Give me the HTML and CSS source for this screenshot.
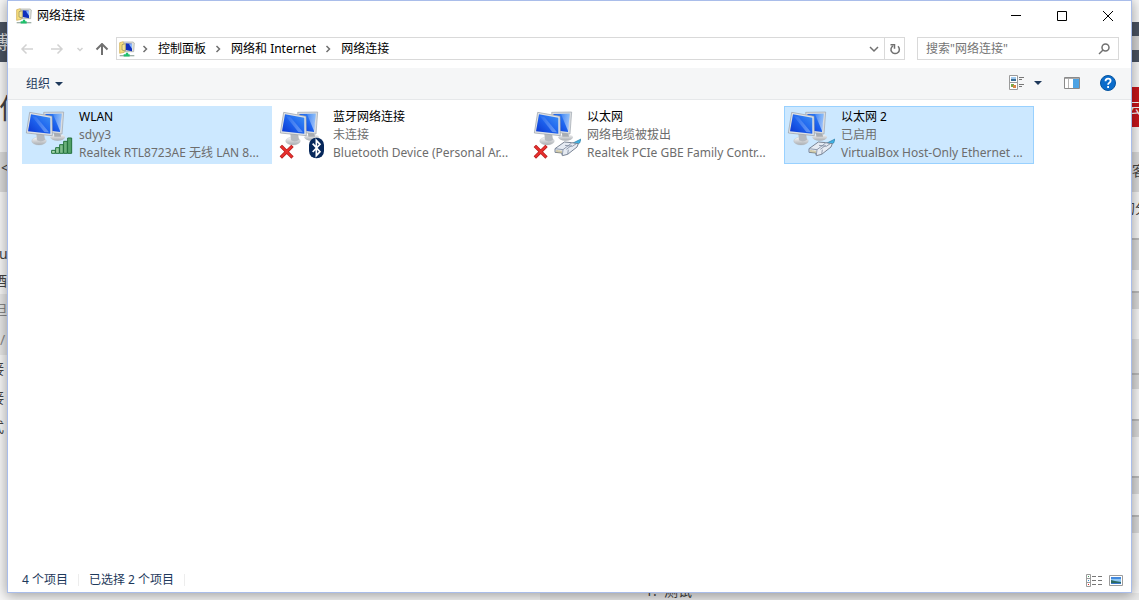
FILE: index.html
```html
<!DOCTYPE html>
<html lang="zh-CN">
<head>
<meta charset="utf-8">
<title>网络连接</title>
<link rel="stylesheet" href="styles.css">
</head>
<body>
<svg class="defs" aria-hidden="true">
  <defs>
    <linearGradient id="screen" x1="0" y1="1" x2="1" y2="0">
      <stop offset="0" stop-color="#0b35cf"/><stop offset=".5" stop-color="#1d63ee"/><stop offset="1" stop-color="#3f92f5"/>
    </linearGradient>
    <linearGradient id="shine" x1="0" y1="0" x2="1" y2="1">
      <stop offset="0" stop-color="#fff" stop-opacity=".1"/><stop offset="1" stop-color="#d8ecff" stop-opacity=".75"/>
    </linearGradient>
    <linearGradient id="metal" x1="0" y1="0" x2="0" y2="1">
      <stop offset="0" stop-color="#fafafa"/><stop offset="1" stop-color="#a8acb1"/>
    </linearGradient>
    <linearGradient id="bar" x1="0" y1="0" x2="1" y2="0">
      <stop offset="0" stop-color="#b5e0b8"/><stop offset="1" stop-color="#4a9b60"/>
    </linearGradient>
    <symbol id="monitors" viewBox="0 0 144 156">
      <ellipse cx="98" cy="88" rx="22" ry="10" fill="url(#metal)"/>
      <path d="M86 70h19l3 16H88z" fill="#a9adb2"/>
      <path d="M56 13l60-1-5 66-50-6z" fill="#d9dcdf" stroke="#9ba3ac" stroke-width="2"/>
      <path d="M61 18l49-1-5 55-40-5z" fill="url(#screen)"/>
      <path d="M84 18h26l-4 53z" fill="url(#shine)"/>
      <ellipse cx="42" cy="99" rx="22" ry="12" fill="url(#metal)" stroke="#b4b8bc"/>
      <path d="M34 76h23l3 20q-12 8-24 1z" fill="#b5b9be"/>
      <path d="M14 13l67 12 1 58-78-8z" fill="#dfe2e5" stroke="#959da6" stroke-width="2"/>
      <path d="M18 19l58 10v48L9 70z" fill="url(#screen)"/>
      <path d="M20 24l14 3 38 46-14-1z" fill="url(#shine)" opacity=".5"/>
    </symbol>
    <symbol id="signal" viewBox="0 0 144 156">
      <g fill="url(#bar)" stroke="#23713c" stroke-width="3">
        <path d="M80 127h11v9H80zM92 119h11v17H92zM104 110h11v26h-11zM116 100h11v36h-11zM128 90h12v46h-12z"/>
      </g>
    </symbol>
    <symbol id="cross" viewBox="0 0 144 156">
      <path d="M9 117l28 28M37 117L9 145" stroke="#b41b1b" stroke-width="10" stroke-linecap="square" fill="none"/>
      <path d="M9 117l28 28M37 117L9 145" stroke="#e8302e" stroke-width="6" stroke-linecap="square" fill="none"/>
    </symbol>
    <symbol id="bluetooth" viewBox="0 0 144 156">
      <rect x="90" y="89" width="45" height="62" rx="22" fill="#06275a"/>
      <path d="M101 107l22 24-11 12V97l11 12-22 23" stroke="#fff" stroke-width="5" fill="none"/>
    </symbol>
    <symbol id="plug" viewBox="0 0 144 156">
      <path d="M118 106l26-13-4 12-16 7z" fill="#3fb2e4" stroke="#2c7da6" stroke-width="2"/>
      <path d="M66 122l28-20 22 2 20 3-4 10-28 22-16 4-2-8-20-2z" fill="#e6ebf3" stroke="#7a8494" stroke-width="3"/>
      <path d="M66 122l24 3 26-20M90 125l-2 16M96 112l22 3 12-8M100 124l16-12M104 139l2-14" stroke="#7f8ba0" stroke-width="2.500" fill="none"/>
      <path d="M72 126v7M78 127v7M84 128v7" stroke="#c0ae67" stroke-width="3"/>
    </symbol>
    <symbol id="folder-net" viewBox="0 0 48 48">
      <path d="M2 5l11-3 3 3v29L2 37z" fill="#f7df7d" stroke="#c9a545" stroke-width="2"/>
      <path d="M14 3h28l4 3-2 26H18z" fill="#dfe2de" stroke="#a4a7a2" stroke-width="2"/>
      <path d="M20 7l19 1v23l-19-4z" fill="#102fbd"/>
      <path d="M30 10l9-1v14z" fill="#8bb8ff"/>
      <path d="M9 11l10-3v22l-10-3z" fill="#f3e49a" stroke="#8f8a5c" stroke-width="2"/>
      <path d="M2 44h44" stroke="#9fb0a8" stroke-width="4"/>
      <path d="M14 43h18M24 35v9" stroke="#1fbf6b" stroke-width="7"/>
    </symbol>
    <symbol id="crumb" viewBox="0 0 8 8">
      <path d="M2.500 1l3 3-3 3" fill="none" stroke="#707070" stroke-width="1.500"/>
    </symbol>
  </defs>
</svg>

<div class="desktop">
  <div class="page-behind" aria-hidden="true">
    <div class="edge edge-left">
      <i class="band dark"></i><i class="band tab"></i><i class="band code"></i>
      <span class="bit l1">博</span><span class="bit l2">何</span><span class="bit l3">&lt;</span>
      <span class="bit l4">u</span><span class="bit l5">酒</span><span class="bit l6">但</span>
      <span class="bit l7">/</span><span class="bit l8">接</span><span class="bit l9">接</span><span class="bit l10">式</span>
    </div>
    <div class="edge edge-right">
      <i class="band dark"></i><i class="pill"></i><i class="band red"></i><i class="band tab"></i>
      <i class="band r1"></i><i class="band r2"></i><i class="band r3"></i><i class="band r4"></i>
      <i class="band r5"></i><i class="band r6"></i><i class="band r7"></i>
      <span class="bit e1">云</span><span class="bit e2">客</span><span class="bit e3">的分</span>
    </div>
    <div class="edge-bottom"><span class="bit b1">1.&nbsp; 测试</span></div>
  </div>

  <main class="window">
    <header class="titlebar">
      <svg class="icon16"><use href="#folder-net"/></svg>
      <h1>网络连接</h1>
      <div class="captions">
        <button aria-label="最小化"><svg viewBox="0 0 10 10"><path d="M0 4.500h10"/></svg></button>
        <button aria-label="最大化"><svg viewBox="0 0 10 10"><path d="M.5 .5h9v9h-9z"/></svg></button>
        <button aria-label="关闭"><svg viewBox="0 0 10 10"><path d="M0 0l10 10M10 0L0 10"/></svg></button>
      </div>
    </header>

    <div class="navbar">
      <button class="nav off" aria-label="后退"><svg viewBox="0 0 14 12"><path d="M13 6H2M6.500 1.500L2 6l4.500 4.500"/></svg></button>
      <button class="nav off" aria-label="前进"><svg viewBox="0 0 14 12"><path d="M1 6h11M7.500 1.500L12 6l-4.500 4.500"/></svg></button>
      <button class="nav off recent" aria-label="最近浏览的位置"><svg viewBox="0 0 14 12"><path d="M4.500 5L7 7.500 9.500 5"/></svg></button>
      <button class="nav up" aria-label="上移"><svg viewBox="0 0 14 12"><path d="M7 12V1.500M1.500 6.500L7 1l5.500 5.500"/></svg></button>
      <nav class="address" aria-label="地址">
        <svg class="icon16"><use href="#folder-net"/></svg>
        <svg class="sep"><use href="#crumb"/></svg><a href="#">控制面板</a>
        <svg class="sep"><use href="#crumb"/></svg><a href="#">网络和 Internet</a>
        <svg class="sep"><use href="#crumb"/></svg><a href="#">网络连接</a>
        <button class="drop" aria-label="以前的位置"><svg viewBox="0 0 10 10"><path d="M1 3l4 4 4-4"/></svg></button>
        <button class="refresh" aria-label="刷新"><svg viewBox="0 0 12 12"><path d="M4 2.800a4.200 4.200 0 1 0 5 .5"/><path d="M1.500 1.800h4v4"/></svg></button>
      </nav>
      <form class="search">
        <input type="text" aria-label="搜索" placeholder='搜索"网络连接"'>
        <svg viewBox="0 0 12 12"><circle cx="7.500" cy="4.500" r="3.500"/><path d="M5 7L1 11"/></svg>
      </form>
    </div>

    <div class="commands">
      <button class="organize">组织 <i class="tri"></i></button>
      <div class="views">
        <button aria-label="更改视图"><svg width="16" height="16" viewBox="0 0 16 16">
          <path d="M.5 .5h8v14h-8zM.5 7.500h8" fill="#fff" stroke="#9b9b9b"/><path d="M2 2h5v2H2z" fill="#9fc9ee"/><path d="M2 4h5v2H2z" fill="#3b6f96"/><path d="M2 9h3v3H2z" fill="#76a848"/><path d="M4 10h3v3H4z" fill="#d98546"/>
          <path d="M10 2.500h5M10 4.500h3M10 9.500h5M10 11.500h3" stroke="#777"/></svg></button>
        <button class="more" aria-label="更多选项"><i class="tri"></i></button>
        <button class="pane" aria-label="预览窗格"><svg width="16" height="12" viewBox="0 0 16 12">
          <path d="M.5 .5h15v11H.5z" fill="#fff" stroke="#8a8a8a"/><path d="M1 1h14v1H1z" fill="#aaa"/><path d="M4.500 2v9" stroke="#b5b5b5"/><path d="M9 2h6v9H9z" fill="#4da3e4"/></svg></button>
        <button class="help" aria-label="帮助"><svg width="16" height="16" viewBox="0 0 16 16">
          <circle cx="8" cy="8" r="7.500" fill="#0b6ccb" stroke="#06549f"/><path d="M5.500 6.200q0-2.600 2.600-2.600 2.500 0 2.500 2.200 0 1.200-1.300 2-1.200.7-1.200 1.900M8.100 11v2" fill="none" stroke="#fff" stroke-width="1.800"/></svg></button>
      </div>
    </div>

    <ul class="connections">
      <li><button class="tile selected">
        <svg class="device"><use href="#monitors"/><use href="#signal"/></svg>
        <span class="info"><b>WLAN</b><span>sdyy3</span><span>Realtek RTL8723AE 无线 LAN 8...</span></span></button></li>
      <li><button class="tile">
        <svg class="device"><use href="#monitors"/><use href="#cross"/><use href="#bluetooth"/></svg>
        <span class="info"><b>蓝牙网络连接</b><span>未连接</span><span>Bluetooth Device (Personal Ar...</span></span></button></li>
      <li><button class="tile">
        <svg class="device"><use href="#monitors"/><use href="#cross"/><use href="#plug"/></svg>
        <span class="info"><b>以太网</b><span>网络电缆被拔出</span><span>Realtek PCIe GBE Family Contr...</span></span></button></li>
      <li><button class="tile selected focused">
        <svg class="device"><use href="#monitors"/><use href="#plug"/></svg>
        <span class="info"><b>以太网 2</b><span>已启用</span><span>VirtualBox Host-Only Ethernet ...</span></span></button></li>
    </ul>

    <footer class="status">
      <span>4 个项目</span><span>已选择 2 个项目</span>
      <div class="modes">
        <button aria-label="详细信息"><svg width="16" height="13" viewBox="0 0 16 13">
          <path d="M.5 .5h4v12h-4zM.5 4.500h4M.5 8.500h4" fill="#fff" stroke="#9b9b9b"/><path d="M2 2h1v1H2z" fill="#3b9c5b"/><path d="M2 6h1v1H2z" fill="#2d8ed8"/><path d="M2 10h1v1H2z" fill="#d22"/>
          <path d="M6 2.500h4M12 2.500h4M6 6.500h4M12 6.500h4M6 10.500h4M12 10.500h4" stroke="#777"/></svg></button>
        <button aria-label="大图标"><svg width="14" height="11" viewBox="0 0 14 11">
          <path d="M.5 .5h13v10H.5z" fill="#fff" stroke="#9b9b9b"/><path d="M2 2h10v7H2z" fill="#8dc6f4"/><path d="M2 2h10v2H2z" fill="#4389dd"/><path d="M2 5l4 1 6 1v2H2z" fill="#2b6a62"/><path d="M2 8h10v1H2z" fill="#3a78c9"/></svg></button>
      </div>
    </footer>
  </main>
</div>
</body>
</html>
```
FILE: styles.css
```css
* { box-sizing: border-box; }
body {
  margin: 0;
  font: 12px/18px "Noto Sans", "Noto Sans CJK SC", sans-serif;
  color: #000;
}
button {
  margin: 0;
  padding: 0;
  border: 0;
  background: none;
  font: inherit;
  color: inherit;
  display: flex;
  align-items: center;
  justify-content: center;
}
svg { display: block; flex: none; }
.defs { position: absolute; width: 0; height: 0; }

.desktop {
  position: relative;
  display: flex;
  min-height: 100vh;
  padding: 0 7px 7px;
  overflow: hidden;
  background: #f8f8f8;
}

/* Web page seen around the window */
.page-behind { position: absolute; inset: 0; overflow: hidden; }
.edge { position: absolute; top: 0; bottom: 0; width: 7px; overflow: hidden; }
.edge-left { left: 0; }
.edge-right { right: 0; }
.edge-bottom {
  position: absolute;
  left: 540px;
  right: 0;
  bottom: 0;
  height: 7px;
  background: #ebebeb;
}
.band { position: absolute; left: 0; right: 0; background: #dcdcdc; }
.band.dark { top: 22px; height: 40px; background: #4a5362; }
.band.tab { top: 152px; height: 40px; }
.band.code { top: 294px; height: 61px; background: #e8e8e8; }
.band.red { top: 87px; height: 40px; background: #c8161d; }
.pill { position: absolute; left: 0; right: 0; top: 36px; height: 14px; background: #d5d5d5; }
.r1 { top: 238px; height: 32px; }
.r2 { top: 291px; height: 18px; }
.r3 { top: 339px; height: 34px; background: #e4e4e4; }
.r4 { top: 373px; height: 16px; }
.r5 { top: 419px; height: 18px; }
.r6 { top: 476px; height: 18px; }
.r7 { top: 515px; height: 18px; }
.r1, .r2, .r4, .r5, .r6, .r7 { border-top: 2px solid #bcbcbc; }
.bit { position: absolute; white-space: nowrap; color: #444; font-size: 14px; line-height: 20px; }
.l1 { left: -9px; top: 32px; font-size: 18px; color: #ddd; }
.l2 { left: -1px; top: 98px; font-size: 28px; }
.l3 { left: 1px; top: 158px; }
.l4 { left: -1px; top: 244px; }
.l5 { left: -7px; top: 271px; }
.l6 { left: -7px; top: 300px; color: #888; }
.l7 { left: 0; top: 330px; color: #888; }
.l8 { left: -10px; top: 359px; }
.l9 { left: -10px; top: 388px; }
.l10 { left: -10px; top: 417px; }
.e1 { left: -5px; top: 98px; color: #fff; }
.e2 { left: 0; top: 161px; }
.e3 { left: -11px; top: 198px; }
.b1 { left: 105px; bottom: -1px; }

/* Explorer window */
.window {
  position: relative;
  flex: 1;
  min-width: 0;
  display: flex;
  flex-direction: column;
  background: #fff;
  border: 1px solid #a9bdea;
  box-shadow: 0 2px 12px 1px rgba(0, 0, 0, .35);
}
.icon16 { width: 16px; height: 16px; }

.titlebar { display: flex; align-items: center; height: 29px; padding-left: 8px; gap: 5px; }
.titlebar h1 { margin: 0; font-size: 12px; font-weight: 400; }
.captions { display: flex; margin-left: auto; }
.captions button { width: 46px; height: 28px; }
.captions svg { width: 10px; height: 10px; fill: none; stroke: #000; }

.navbar { display: flex; align-items: center; height: 38px; padding: 7px 12px 8px 4px; }
.nav { width: 30px; height: 23px; }
.nav svg { width: 14px; height: 12px; fill: none; stroke: #707070; stroke-width: 2; }
.nav.off svg { stroke: #d2d2d2; stroke-width: 1.5; }
.nav.recent { width: 16px; }
.nav.up { width: 28px; }
.address {
  flex: 1;
  display: flex;
  align-items: center;
  height: 23px;
  padding-left: 2px;
  border: 1px solid #d9d9d9;
}
.address a { color: #000; text-decoration: none; }
.sep { width: 8px; height: 8px; margin: 0 9px 0 8px; }
.sep:nth-of-type(2) { margin-left: 6px; }
.address .drop { width: 20px; height: 21px; margin-left: auto; }
.address .refresh { width: 20px; height: 21px; border-left: 1px solid #d9d9d9; }
.drop svg { width: 10px; height: 10px; }
.refresh svg { width: 12px; height: 12px; }
.drop svg, .refresh svg, .search svg { fill: none; stroke: #707070; stroke-width: 1.5; }
.search {
  display: flex;
  align-items: center;
  width: 202px;
  height: 23px;
  margin-left: 12px;
  padding: 0 8px;
  border: 1px solid #d9d9d9;
}
.search input {
  flex: 1;
  min-width: 0;
  padding: 0;
  border: 0;
  outline: 0;
  font: inherit;
}
.search input::placeholder { color: #757575; opacity: 1; }
.search svg { width: 12px; height: 12px; }

.commands {
  display: flex;
  align-items: center;
  justify-content: space-between;
  height: 32px;
  padding: 0 15px 0 18px;
  background: #f5f6f7;
  border-bottom: 1px solid #e6e8ea;
  color: #1e395b;
}
.organize { gap: 5px; }
.tri {
  border: solid transparent;
  border-width: 4px 4px 0;
  border-top-color: #1e395b;
}
.views { display: flex; align-items: center; padding-bottom: 1px; }
.more { margin-left: 9px; }
.pane { margin-left: 22px; }
.help { margin-left: 20px; }

.connections {
  flex: 1;
  display: grid;
  grid-template-columns: repeat(auto-fill, 250px);
  align-content: start;
  gap: 4px;
  margin: 0;
  padding: 6px 14px;
  list-style: none;
}
.tile {
  justify-content: flex-start;
  align-items: flex-start;
  gap: 6px;
  width: 100%;
  padding: 1px 2px;
  border: 1px solid transparent;
  text-align: left;
}
.tile.selected { background: #cce8ff; border-color: #cce8ff; }
.tile.focused { border-color: #99d1ff; }
.device { width: 48px; height: 52px; }
.info { display: flex; flex-direction: column; color: #6d6d6d; white-space: nowrap; }
.info b { font-weight: 400; color: #000; }

.status {
  display: flex;
  align-items: center;
  height: 24px;
  padding: 0 8px 0 14px;
  color: #1e395b;
}
.status > span { margin-right: 10px; padding-right: 10px; border-right: 1px solid #ededed; line-height: 12px; }
.modes { display: flex; gap: 7px; margin-left: auto; }
```
